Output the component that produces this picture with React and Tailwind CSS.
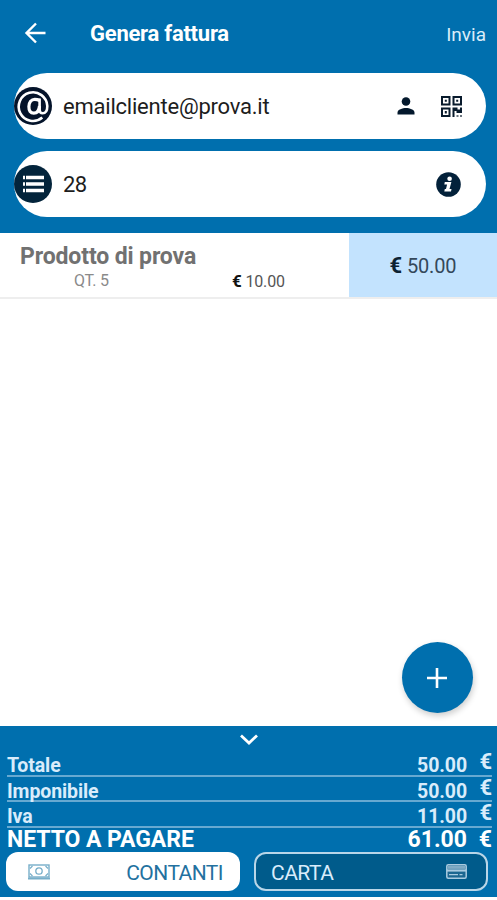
import React from "react";

function BackArrow() {
  return (
    <svg className="block h-[22px] w-[22px]" viewBox="0 0 22 22" fill="none" stroke="#fff" strokeWidth="2.4">
      <path d="M21.500 11H3M12 1.500L2.500 11l9.500 9.500" />
    </svg>
  );
}

function AtBadge() {
  return (
    <svg className="block h-[38px] w-[38px]" viewBox="0 0 38 38" fill="none">
      <circle cx="19" cy="19" r="19" fill="#04132a" />
      <path
        d="M28.300 30.500A14.300 14.300 0 1 1 33.300 19c0 4.800-1.800 7.300-4.700 7.300-2.300 0-3-1.300-3-3.800V11.500"
        stroke="#fff"
        strokeWidth="2.600"
      />
      <path
        d="M25.500 19c-.4 4.700-2.600 7.200-5.700 7.200-3.200 0-5-2.500-4.900-6.600.1-4.600 2.500-7.300 5.900-7.300 1.800 0 3.300.4 4.800 1.200"
        stroke="#fff"
        strokeWidth="3.200"
      />
    </svg>
  );
}

function ListBadge() {
  return (
    <svg className="block h-[38px] w-[38px]" viewBox="0 0 38 38">
      <circle cx="19" cy="19" r="19" fill="#03243b" />
      <path d="M9 12.500h2M9 19h2M9 25.500h2M12 12.500h18M12 19h18M12 25.500h18" stroke="#fff" strokeWidth="3.400" />
    </svg>
  );
}

function Person() {
  return (
    <svg className="block h-[18px] w-[18px]" viewBox="0 0 18 18" fill="#03182c">
      <circle cx="9" cy="4.500" r="4.300" />
      <path d="M.5 17.500v-1.800C.5 12.500 5.500 11 9 11s8.500 1.500 8.500 4.700v1.800z" />
    </svg>
  );
}

function QrCode() {
  return (
    <svg className="block h-[21px] w-[21px]" viewBox="0 0 21 21" fill="#081a2c">
      <path
        fillRule="evenodd"
        d="M0 0h9.500v9.500H0zM2 2v5.500h5.500V2zM11.500 0H21v9.500h-9.500zM13.500 2v5.500H19V2zM0 11.500h9.500V21H0zM2 13.500V19h5.500v-5.500z"
      />
      <path d="M3.800 3.800h2v2h-2zM15.200 3.800h2v2h-2zM3.800 15h2v2.500h-2zM11.500 11.500h5v2H19v-2h2v5.500h-5.500v-2h-2V21h-2z" />
      <path d="M15.500 19h2v2h-2zM19 19h2v2h-2z" opacity=".6" />
    </svg>
  );
}

function Info() {
  return (
    <svg className="block h-[25px] w-[25px]" viewBox="0 0 25 25">
      <circle cx="12.500" cy="12.500" r="12.300" fill="#03213a" />
      <g fill="#fff">
        <circle cx="13.600" cy="6.700" r="2.300" />
        <path d="M8.800 10h6.600l-1.900 7h2l-.5 2.600H8.300l.5-2.600h1.200l1.100-4.400H8.300z" />
      </g>
    </svg>
  );
}

function Banknote() {
  return (
    <svg className="block h-4 w-[22px]" viewBox="0 0 22 16" fill="none" stroke="#77aec9">
      <rect x="1" y="1" width="20" height="12" strokeWidth="1.400" />
      <path d="M0 14.500h22" strokeWidth="2" />
      <circle cx="11" cy="7" r="3.200" strokeWidth="1.300" />
      <path d="M2 4.500L4.500 2M20 4.500L17.500 2M2 9.500L4.500 12M20 9.500L17.500 12" strokeWidth="1.200" />
    </svg>
  );
}

function Card() {
  return (
    <svg className="block h-[15px] w-[21px]" viewBox="0 0 21 15" fill="none" stroke="#a9cbe0">
      <rect x=".8" y=".8" width="19.400" height="13.400" rx="1.500" fill="#1c6791" strokeWidth="1.500" />
      <path d="M1.500 3.400h18" stroke="#7fabc5" strokeWidth="3" />
      <path d="M1 6.500h19" strokeWidth="2.200" />
      <path d="M3 10.700h9M13.500 10.700h3" strokeWidth="1.300" />
    </svg>
  );
}

function TotalRow({ label, value, height }) {
  return (
    <div className={"flex justify-between border-b-2 border-[#67a9d1] " + height}>
      <span className="pt-[5px] text-[19.500px] leading-[20px] tracking-[-0.1px]">{label}</span>
      <span className="flex">
        <span className="pt-[5px] text-[19.500px] leading-[20px] tracking-[-0.1px]">{value}</span>
        <span className="w-[25px] text-right text-[22px] leading-[22px]">€</span>
      </span>
    </div>
  );
}

export default function App() {
  return (
    <div className="flex h-[900px] w-[497px] flex-col overflow-hidden bg-white font-['Roboto',sans-serif]">
      <header className="h-[233px] shrink-0 bg-[#006fae]">
        <div className="flex h-[73px] items-start pl-6 pr-[11px] pt-[22px] text-white">
          <BackArrow />
          <h1 className="ml-[44px] text-[22px] font-bold leading-[23px] tracking-[-0.250px]">Genera fattura</h1>
          <span className="ml-auto text-[19px] leading-[25px] text-[#d9ecf9]">Invia</span>
        </div>
        <div className="ml-3.5 flex h-[66px] w-[472px] items-center rounded-full bg-white pr-6">
          <AtBadge />
          <span className="ml-[11px] pt-px text-[22px] leading-6 tracking-[-0.220px] text-[#1d1d1d]">emailcliente@prova.it</span>
          <div className="ml-auto flex items-center gap-[26px]">
            <Person />
            <QrCode />
          </div>
        </div>
        <div className="ml-3.5 mt-3 flex h-[66px] w-[472px] items-center rounded-full bg-white pr-[25px]">
          <ListBadge />
          <span className="ml-[11px] pt-px text-[22px] leading-6 tracking-[-0.600px] text-[#1d1d1d]">28</span>
          <div className="ml-auto">
            <Info />
          </div>
        </div>
      </header>

      <section className="flex h-[66px] shrink-0 border-b-2 border-[#eeeeee]">
        <div className="w-[349px] pl-5 pt-[11px]">
          <p className="text-[23px] font-bold leading-[26px] tracking-[-0.120px] text-[#717171]">Prodotto di prova</p>
          <div className="flex text-[16px] leading-[22px] tracking-[-0.150px]">
            <span className="ml-[54px] w-[158px] text-[#8a8a8a]">QT. 5</span>
            <span className="text-[#555]">
              <b className="text-[17px] text-[#111]">€</b> 10.00
            </span>
          </div>
        </div>
        <div className="flex grow items-center justify-center bg-[#c3e3fe] text-[20px] tracking-[-0.150px] text-[#34485a]">
          <span>
            <b className="text-[22px] text-[#0c2233]">€</b> 50.00
          </span>
        </div>
      </section>

      <main className="flex grow items-end justify-end pb-[13px] pr-6">
        <button className="flex h-[71px] w-[71px] items-center justify-center rounded-full bg-[#006fae] shadow-[1px_3px_6px_rgba(0,0,0,0.2)]">
          <svg className="mr-px block h-5 w-5" viewBox="0 0 20 20" stroke="#fff" strokeWidth="2.600">
            <path d="M10 0v20M0 10h20" />
          </svg>
        </button>
      </main>

      <footer className="flex h-[171px] shrink-0 flex-col bg-[#006fae] font-bold text-[#d9ecfb]">
        <div className="flex h-[25px] justify-center pt-2">
          <svg className="block h-[11px] w-[18px]" viewBox="0 0 18 11" fill="none" stroke="#fff" strokeWidth="2.800">
            <path d="M1 1.500l8 7.500 8-7.500" />
          </svg>
        </div>
        <div className="pl-[7px] pr-[5px]">
          <TotalRow label="Totale" value="50.00" height="h-[26px]" />
          <TotalRow label="Imponibile" value="50.00" height="h-[25px]" />
          <TotalRow label="Iva" value="11.00" height="h-[26px]" />
          <div className="flex h-[24px] justify-between text-[23px] leading-6 text-white">
            <span className="tracking-[-0.050px]">NETTO A PAGARE</span>
            <span className="flex">
              61.00<span className="w-[25px] text-right">€</span>
            </span>
          </div>
        </div>
        <div className="flex gap-3.5 pl-1.5 text-[21px] font-normal">
          <button className="flex h-[39px] w-[234px] items-center justify-between rounded-xl bg-white pl-[22px] pr-[17px] text-[#23719f]">
            <Banknote />
            <span className="pt-1 tracking-[-0.550px]">CONTANTI</span>
          </button>
          <button className="flex h-[39px] w-[234px] items-center justify-between rounded-xl border-2 border-[#b9d6e8] bg-[#005b8b] pl-[15px] pr-[19px] text-[#d9ecfb]">
            <span className="pt-1 tracking-[-0.500px]">CARTA</span>
            <Card />
          </button>
        </div>
      </footer>
      <div className="h-[3px] shrink-0 bg-white" />
    </div>
  );
}
